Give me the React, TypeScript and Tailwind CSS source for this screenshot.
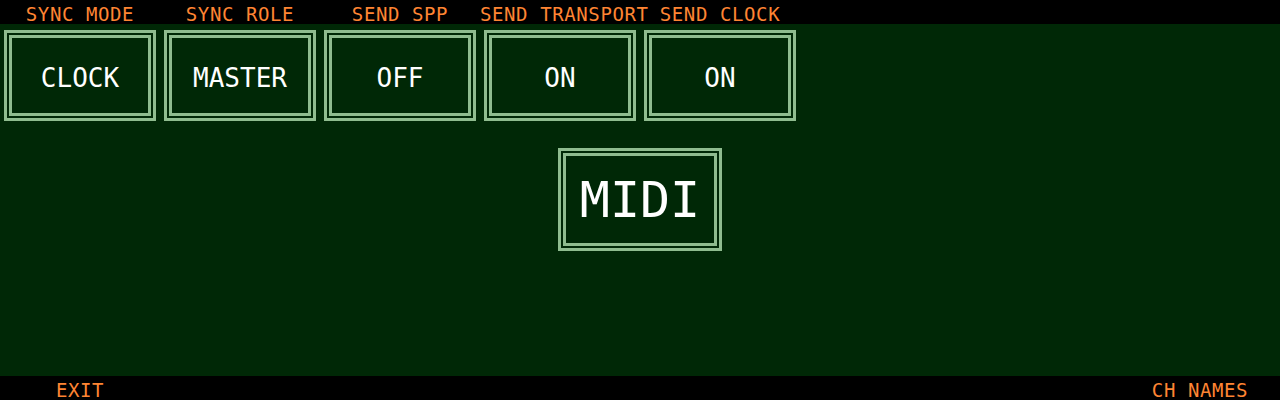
import React from 'react';

const font = { fontFamily: '"DejaVu Sans Mono", "Liberation Mono", monospace' };

const topLabels = ['SYNC MODE', 'SYNC ROLE', 'SEND SPP', 'SEND TRANSPORT', 'SEND CLOCK', '', '', ''];
const values = ['CLOCK', 'MASTER', 'OFF', 'ON', 'ON'];
const bottomLabels = ['EXIT', '', '', '', '', '', '', 'CH NAMES'];

function LabelBar({ labels }: { labels: string[] }) {
  return (
    <div className="grid h-[24px] grid-cols-8 bg-black">
      {labels.map((l, i) => (
        <div
          key={i}
          className="pt-[5px] text-center text-[19px] leading-[19px] tracking-[0.6px] text-[#ff8533] whitespace-nowrap"
        >
          {l}
        </div>
      ))}
    </div>
  );
}

function FrameBox({ children, className }: { children: React.ReactNode; className: string }) {
  return (
    <div className={`border-[3px] border-[#8fbc8f] p-[2px] ${className}`}>
      <div className="flex h-full w-full items-center justify-center border-[3px] border-[#8fbc8f] text-white">
        {children}
      </div>
    </div>
  );
}

export default function App() {
  return (
    <div className="flex h-[400px] w-[1280px] flex-col bg-[#002806]" style={font}>
      <LabelBar labels={topLabels} />

      <div className="flex flex-1 flex-col">
        <div className="mt-[6px] grid grid-cols-8">
          {values.map((v, i) => (
            <div key={i} className="px-[4px]">
              <FrameBox className="h-[91px] w-[152px]">
                <span className="pt-[4px] text-[26px] leading-none">{v}</span>
              </FrameBox>
            </div>
          ))}
        </div>

        <div className="mt-[27px] flex justify-center">
          <FrameBox className="h-[103px] w-[164px]">
            <span className="text-[50px] leading-none">MIDI</span>
          </FrameBox>
        </div>
      </div>

      <LabelBar labels={bottomLabels} />
    </div>
  );
}
